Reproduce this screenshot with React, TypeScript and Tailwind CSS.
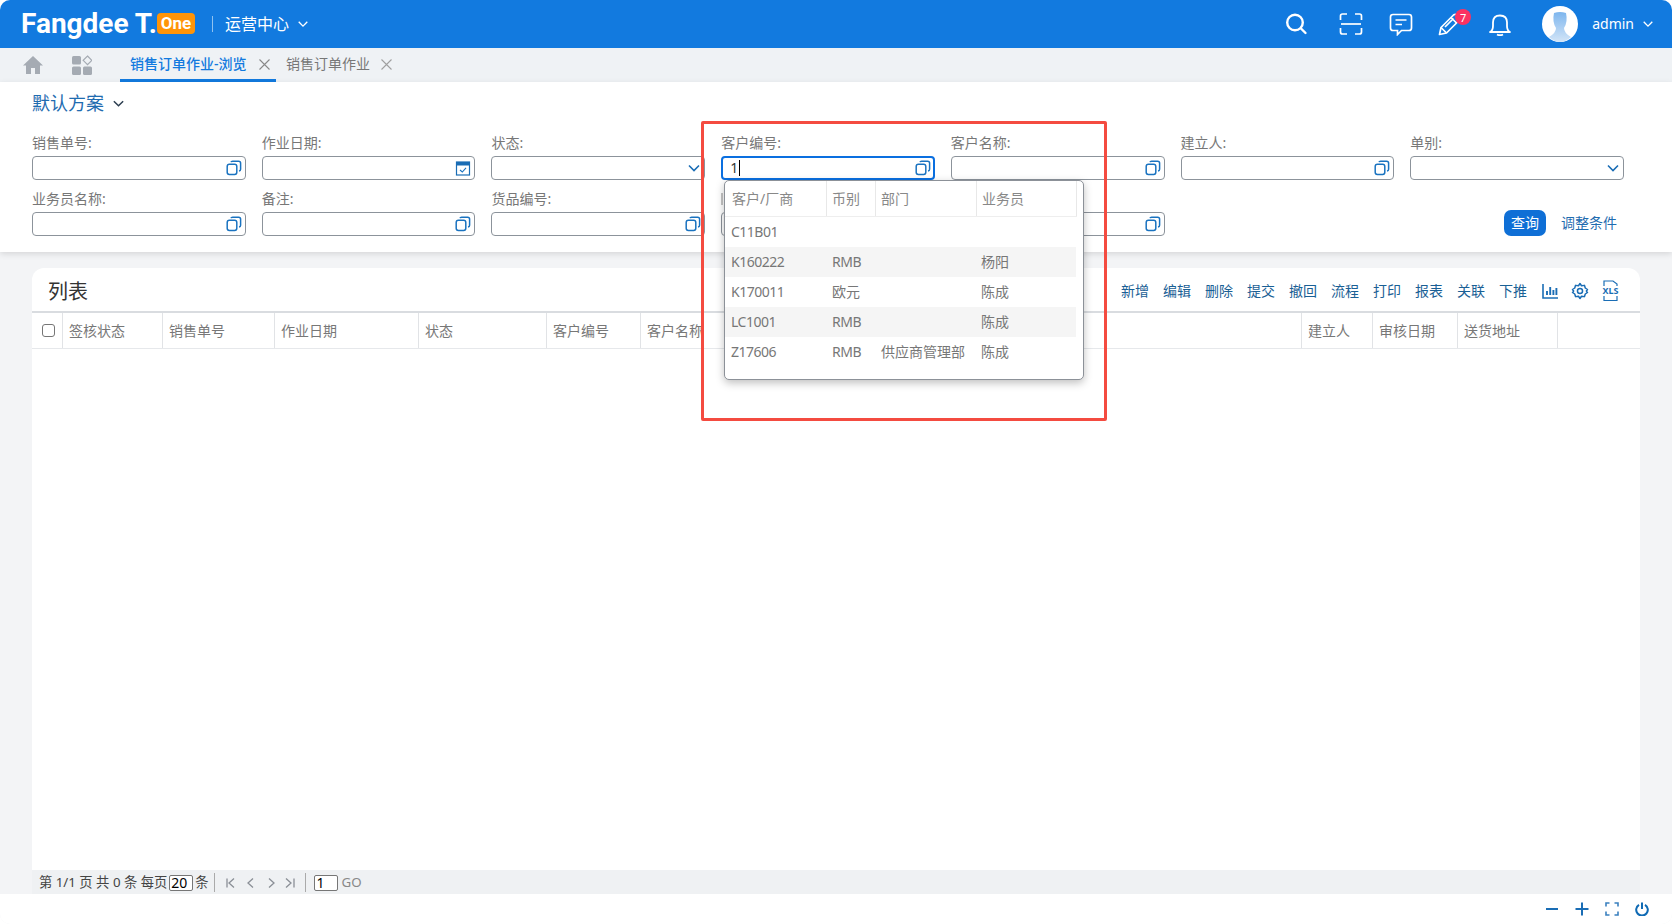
import React from "react";

const FONT = "[font-family:'Noto_Sans','Noto_Sans_CJK_SC',sans-serif]";

// filter fields, row by row. The last two labels sit behind the dropdown.
const fields: { label: string; icon: string; focused?: boolean; sliver?: boolean }[] = [
  { label: "销售单号:", icon: "copy" },
  { label: "作业日期:", icon: "date" },
  { label: "状态:", icon: "select" },
  { label: "客户编号:", icon: "copy", focused: true },
  { label: "客户名称:", icon: "copy" },
  { label: "建立人:", icon: "copy" },
  { label: "单别:", icon: "select" },
  { label: "业务员名称:", icon: "copy" },
  { label: "备注:", icon: "copy" },
  { label: "货品编号:", icon: "copy" },
  { label: "", icon: "copy", sliver: true },
  { label: "", icon: "copy" },
];

const toolbar = ["新增", "编辑", "删除", "提交", "撤回", "流程", "打印", "报表", "关联", "下推"];

const columns = [
  { title: "签核状态", w: "w-[100px]" },
  { title: "销售单号", w: "w-[112px]" },
  { title: "作业日期", w: "w-[144px]" },
  { title: "状态", w: "w-[128px]" },
  { title: "客户编号", w: "w-[94px]" },
  { title: "客户名称", w: "w-[661px]" },
  { title: "建立人", w: "w-[71px]" },
  { title: "审核日期", w: "w-[85px]" },
  { title: "送货地址", w: "w-[100px]" },
];

const options = [
  ["C11B01", "", "", ""],
  ["K160222", "RMB", "", "杨阳"],
  ["K170011", "欧元", "", "陈成"],
  ["LC1001", "RMB", "", "陈成"],
  ["Z17606", "RMB", "供应商管理部", "陈成"],
];

function CopyIcon() {
  return (
    <svg width="16" height="16" viewBox="0 0 16 16" fill="none" stroke="#1a73c0" strokeWidth="1.5">
      <rect x="1.2" y="4.2" width="9.6" height="10.2" rx="2.2" />
      <path d="M5 2.2 Q5.2 1.2 6.6 1.2 H12.6 Q14.6 1.2 14.6 3.2 V9.2 Q14.6 10.8 13 11" />
    </svg>
  );
}

function DateIcon() {
  return (
    <svg width="16" height="16" viewBox="0 0 16 16" fill="none">
      <rect x="1.5" y="2" width="13" height="13" stroke="#1a6db5" strokeWidth="1.2" />
      <rect x="1.5" y="2" width="13" height="3.5" fill="#1a6db5" />
      <path d="M5 10 L7.3 12 L11 7.8" stroke="#1a73c0" strokeWidth="1.1" />
    </svg>
  );
}

function ChevronIcon({ color = "#1a6db5", size = 14 }: { color?: string; size?: number }) {
  return (
    <svg width={size} height={size} viewBox="0 0 14 14" fill="none" stroke={color} strokeWidth="1.6">
      <path d="M2 4.5 L7 9.5 L12 4.5" />
    </svg>
  );
}

function CloseIcon({ color }: { color: string }) {
  return (
    <svg width="11" height="11" viewBox="0 0 11 11" fill="none" stroke={color} strokeWidth="1.1">
      <path d="M0.5 0.5 L10.5 10.5 M10.5 0.5 L0.5 10.5" />
    </svg>
  );
}

function FieldInput({ icon, focused }: { icon: string; focused?: boolean }) {
  return (
    <div
      className={
        focused
          ? "flex h-6 items-center justify-between rounded-[4px] border-2 border-[#0a6fe0] bg-white pl-[7px] pr-[2px]"
          : "flex h-6 items-center justify-end rounded-[4px] border border-[#8c939b] bg-white pr-[3px]"
      }
    >
      {focused && (
        <span className="flex items-center text-sm leading-none text-[#333]">
          1<span className="ml-[1px] h-4 w-px bg-black" />
        </span>
      )}
      {icon === "copy" && <CopyIcon />}
      {icon === "date" && <DateIcon />}
      {icon === "select" && <ChevronIcon />}
    </div>
  );
}

function Header() {
  return (
    <header className="flex h-12 shrink-0 items-center bg-[#127adf] pl-[21px] pr-[18px] text-white">
      <span className="[font-family:Roboto,sans-serif] text-[28px] font-bold leading-none">Fangdee T.</span>
      <span className="mb-[2px] flex h-[21px] w-[38px] items-center justify-center rounded-[4px] bg-[#ff9408] [font-family:Roboto,sans-serif] text-[17px] font-bold leading-none">
        One
      </span>
      <span className="ml-[17px] h-4 w-px bg-[#8fc2f0]" />
      <span className="ml-3 text-base">运营中心</span>
      <span className="ml-2">
        <ChevronIcon color="#ffffff" size={12} />
      </span>
      <div className="ml-auto flex items-center">
        <svg width="24" height="24" viewBox="0 0 24 24" fill="none" stroke="#fff" strokeWidth="2.4" strokeLinecap="round">
          <circle cx="11" cy="10.5" r="7.8" />
          <path d="M17 16.5 L21.5 21" />
        </svg>
        <svg className="ml-[31px]" width="24" height="24" viewBox="0 0 24 24" fill="none" stroke="#fff" strokeWidth="1.7">
          <path d="M8 2 H3.5 Q1.5 2 1.5 4 V8 M16 2 H20.5 Q22.5 2 22.5 4 V8 M8 22 H3.5 Q1.5 22 1.5 20 V16 M16 22 H20.5 Q22.5 22 22.5 20 V16" />
          <path d="M2 12 H22" />
        </svg>
        <svg className="ml-[26px]" width="24" height="24" viewBox="0 0 24 24" fill="none" stroke="#fff" strokeWidth="1.7">
          <path d="M4 2.5 H20 Q22.5 2.5 22.5 5 V16 Q22.5 18.5 20 18.5 H12.5 L8.5 22.5 V18.5 H4 Q1.5 18.5 1.5 16 V5 Q1.5 2.5 4 2.5 Z" />
          <path d="M6.5 8 H17.5 M6.5 12.5 H13" />
        </svg>
        <div className="relative ml-[25px]">
          <svg width="24" height="24" viewBox="0 0 24 24" fill="none" stroke="#fff" strokeWidth="1.7" strokeLinejoin="round">
            <path d="M1.5 22.5 L3 15.5 L15.5 3 Q17.5 1.5 19.5 3 L21 4.5 Q22.5 6.5 21 8.5 L8.5 21 Z" />
            <path d="M3 15.5 L8.5 21 M13 5.5 L18.5 11 M7 15 L15.5 6.5" />
          </svg>
          <span className="absolute -top-[3px] left-[17px] flex h-4 w-4 items-center justify-center rounded-full bg-[#fb3262] text-[11px] leading-none">
            7
          </span>
        </div>
        <svg className="ml-[26px]" width="24" height="24" viewBox="0 0 24 24" fill="none" stroke="#fff" strokeWidth="1.8" strokeLinejoin="round">
          <path d="M2 20 Q5 18.5 5 14 V10.5 Q5 3.5 12 3.5 Q19 3.5 19 10.5 V14 Q19 18.5 22 20 Z" />
          <path d="M9 22.5 Q12 24 15 22.5" />
        </svg>
        <svg className="ml-[30px]" width="36" height="36" viewBox="0 0 36 36">
          <defs>
            <linearGradient id="avatar" x1="0" y1="0" x2="0" y2="1">
              <stop offset="0" stopColor="#7eb6ee" />
              <stop offset="1" stopColor="#d3e5f7" />
            </linearGradient>
          </defs>
          <circle cx="18" cy="18" r="18" fill="#fff" />
          <path d="M12 7 Q18 5 24 7 Q26 16 22 22 Q22 27 29 31 Q24 36 18 36 Q12 36 7 31 Q14 27 14 22 Q10 16 12 7 Z" fill="url(#avatar)" />
        </svg>
        <span className="ml-[14px] text-sm leading-none">admin</span>
        <span className="ml-[8px]">
          <ChevronIcon color="#ffffff" size={12} />
        </span>
      </div>
    </header>
  );
}

function TabBar() {
  return (
    <nav className="flex h-[34px] shrink-0 items-stretch bg-[#eff2f5] text-sm">
      <div className="ml-[23px] flex items-center">
        <svg width="20" height="20" viewBox="0 0 20 20" fill="#a5abb3">
          <path d="M10 1 L20 10.5 H17 V19 H12 V13 H8 V19 H3 V10.5 H0 Z" />
        </svg>
      </div>
      <div className="ml-[29px] flex items-center">
        <svg width="20" height="20" viewBox="0 0 20 20" fill="#a5abb3">
          <rect x="0" y="1" width="9" height="8.5" rx="1.5" />
          <rect x="0" y="11.5" width="9" height="8.5" rx="1.5" />
          <rect x="11" y="11.5" width="9" height="8.5" rx="1.5" />
          <path d="M15.5 1 L19.8 5.3 L15.5 9.6 L11.2 5.3 Z" fill="none" stroke="#a5abb3" strokeWidth="1.2" />
        </svg>
      </div>
      <div className="ml-7 flex w-[156px] items-center border-b-[3px] border-[#127adf] pl-[10px] pt-[1px]">
        <span className="font-medium text-[#127adf]">销售订单作业-浏览</span>
        <span className="ml-[12px]">
          <CloseIcon color="#888888" />
        </span>
      </div>
      <div className="ml-[10px] flex items-center pb-[2px]">
        <span className="text-[#777]">销售订单作业</span>
        <span className="ml-[11px]">
          <CloseIcon color="#a0a0a0" />
        </span>
      </div>
    </nav>
  );
}

function FilterPanel() {
  return (
    <section className="relative h-[170px] shrink-0 bg-white pl-8 pr-12 shadow-[0_2px_6px_rgba(0,0,0,0.12)]">
      <div className="flex h-[42px] items-center">
        <span className="text-lg text-[#1f6cb0]">默认方案</span>
        <span className="ml-2">
          <ChevronIcon color="#2c3e50" size={13} />
        </span>
      </div>
      <div className="mt-[7px] grid grid-cols-7 gap-x-4 gap-y-[7px]">
        {fields.map((f, i) => (
          <div key={i}>
            <div className="flex h-[25px] items-center pb-[2px] text-sm text-[#777]">
              {f.label}
              {f.sliver && <span className="h-3 w-[2px] bg-[#c4c4c4]" />}
            </div>
            <FieldInput icon={f.icon} focused={f.focused} />
          </div>
        ))}
        <div className="col-start-7 flex items-end justify-end pr-[7px]">
          <button className="h-[26px] w-[42px] rounded-[7px] bg-[#0f6fd6] text-sm text-white">查询</button>
          <button className="ml-[15px] h-[26px] text-sm text-[#1f6cb0]">调整条件</button>
        </div>
      </div>
    </section>
  );
}

function ListCard() {
  return (
    <section className="mx-8 mt-4 flex min-h-0 flex-1 flex-col overflow-hidden rounded-t-xl bg-white">
      <div className="flex h-[45px] shrink-0 items-center justify-between border-b-2 border-[#d9dce0] pl-4 pr-[20px] pt-[2px]">
        <h2 className="mt-[2px] text-xl font-normal text-[#333]">列表</h2>
        <div className="flex items-center gap-[14px] text-sm text-[#1a6095]">
          {toolbar.map((t) => (
            <span key={t}>{t}</span>
          ))}
          <div className="flex items-center gap-[12px]">
            <svg width="18" height="18" viewBox="0 0 18 18" fill="none" stroke="#1a6db5" strokeWidth="1.6">
              <path d="M2 2 V16 H17" />
              <path d="M6 13 V9 M9.2 13 V5 M12.4 13 V8 M15.4 13 V6" strokeWidth="1.9" />
            </svg>
            <svg width="18" height="18" viewBox="0 0 24 24" fill="none" stroke="#1a6db5" strokeWidth="2">
              <path d="M12 2 L14 5 L18 4.5 L19 8 L22 10 L20.5 12 L22 14 L19 16 L18 19.5 L14 19 L12 22 L10 19 L6 19.5 L5 16 L2 14 L3.5 12 L2 10 L5 8 L6 4.5 L10 5 Z" strokeLinejoin="round" />
              <circle cx="12" cy="12" r="3.4" />
            </svg>
            <span className="relative flex h-[22px] w-[19px] items-center justify-center text-[9px] font-bold leading-none text-[#1a6db5]">
              XLS
              <svg className="absolute inset-0" width="19" height="22" viewBox="0 0 19 22" fill="none" stroke="#1a6db5" strokeWidth="1.2">
                <path d="M3 6 V1 H12 L16 4 V6 M3 16 V20.5 H16 V16" />
              </svg>
            </span>
          </div>
        </div>
      </div>
      <div className="flex h-9 shrink-0 border-b border-[#e6e8eb] text-sm text-[#777]">
        <div className="flex w-[31px] items-center justify-center border-r border-[#e1e3e6] pl-[2px]">
          <span className="h-[13px] w-[13px] rounded-[3px] border border-[#767676] bg-white" />
        </div>
        {columns.map((c) => (
          <div key={c.title} className={`relative flex items-center border-r border-[#e1e3e6] pl-[6px] ${c.w}`}>
            {c.title}
          </div>
        ))}
      </div>
      <div className="flex-1 bg-white" />
      <footer className="flex h-6 shrink-0 items-center bg-[#eff1f3] pl-[7px] pt-[1px] text-[13.3px] text-[#444]">
        <span className="whitespace-pre">第 1/1 页 共 0 条 每页</span>
        <span className="ml-[2px] flex h-4 w-6 items-center rounded-[2px] border border-[#767676] bg-white pl-[1px] text-sm leading-none text-black">
          20
        </span>
        <span className="ml-[2px]">条</span>
        <span className="ml-[5px] h-[19px] w-px bg-[#aaa]" />
        <svg className="ml-[11px]" width="72" height="12" viewBox="0 0 72 12" fill="none" stroke="#8a8f96" strokeWidth="1.3">
          <path d="M1 1.5 V10.5 M8 1.5 L3 6 L8 10.5" />
          <path d="M27 1.5 L22 6 L27 10.5" />
          <path d="M43 1.5 L48 6 L43 10.5" />
          <path d="M60 1.5 L65 6 L60 10.5 M68 1.5 V10.5" />
        </svg>
        <span className="ml-[7px] h-[19px] w-px bg-[#aaa]" />
        <span className="ml-2 flex h-4 w-6 items-center rounded-[2px] border border-[#767676] bg-white pl-[2px] text-sm leading-none text-black">
          1
        </span>
        <span className="ml-1 text-[#888]">GO</span>
      </footer>
    </section>
  );
}

function StatusBar() {
  return (
    <div className="flex h-[30px] shrink-0 items-center justify-end gap-4 bg-white pb-[1px] pr-[23px]">
      <svg width="14" height="14" viewBox="0 0 14 14" stroke="#1a6db5" strokeWidth="2">
        <path d="M1 7 H13" />
      </svg>
      <svg width="14" height="14" viewBox="0 0 14 14" stroke="#1a6db5" strokeWidth="2">
        <path d="M0.5 7 H13.5 M7 0.5 V13.5" />
      </svg>
      <svg width="14" height="14" viewBox="0 0 14 14" fill="none" stroke="#3a80bf" strokeWidth="1.6">
        <path d="M1 4.5 V1 H4.5 M9.5 1 H13 V4.5 M13 9.5 V13 H9.5 M4.5 13 H1 V9.5" />
      </svg>
      <svg width="14" height="14" viewBox="0 0 14 14" fill="none" stroke="#0f6ab4" strokeWidth="2">
        <path d="M4 2.8 A5.8 5.8 0 1 0 10 2.8 M7 0.5 V7" />
      </svg>
    </div>
  );
}

function CustomerDropdown() {
  return (
    <div className="absolute left-[724px] top-[180px] z-20 h-[200px] w-[360px] rounded-[5px] border border-[#8c9198] bg-white text-sm shadow-[0_3px_8px_rgba(0,0,0,0.25)]">
      <div className="grid h-9 w-[352px] grid-cols-[102px_49px_101px_100px] border-b border-[#eeeeee] text-[#888]">
        {["客户/厂商", "币别", "部门", "业务员"].map((h, i) => (
          <div key={h} className={`flex items-center border-r border-[#e8e8e8] ${i === 0 ? "pl-[7px]" : "pl-[5px]"}`}>
            {h}
          </div>
        ))}
      </div>
      {options.map((row, i) => (
        <div
          key={row[0]}
          className={`grid h-[30px] w-[351px] grid-cols-[101px_49px_101px_100px] items-center text-[#777] ${i % 2 === 1 ? "bg-[#f5f5f5]" : ""}`}
        >
          {row.map((cell, j) => (
            <span
              key={j}
              className={`whitespace-nowrap ${j === 3 ? "pl-[5px]" : "pl-[6px]"} ${/^[A-Z0-9]+$/.test(cell) ? "tracking-[-0.5px]" : ""}`}
            >
              {cell}
            </span>
          ))}
        </div>
      ))}
    </div>
  );
}

export default function App() {
  return (
    <div className={`relative h-[924px] w-full overflow-hidden bg-white ${FONT}`}>
      <div className="flex h-full flex-col overflow-hidden rounded-[10px] bg-[#f3f4f6]">
        <Header />
        <TabBar />
        <FilterPanel />
        <ListCard />
        <StatusBar />
      </div>
      <CustomerDropdown />
      {/* annotation drawn on the screenshot */}
      <div className="pointer-events-none absolute left-[701px] top-[121px] z-30 h-[300px] w-[406px] rounded-[2px] border-[3px] border-[#f44b40]" />
    </div>
  );
}
